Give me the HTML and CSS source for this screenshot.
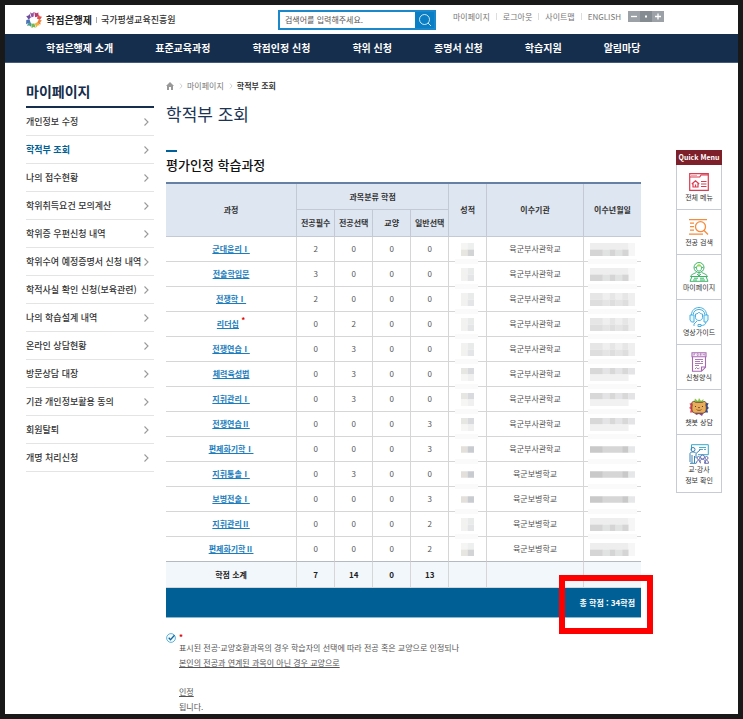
FILE: index.html
```html
<!DOCTYPE html>
<html lang="ko">
<head>
<meta charset="utf-8">
<meta name="viewport" content="width=device-width, initial-scale=1">
<title>학적부 조회 | 학점은행제</title>
<link rel="stylesheet" href="styles.css">
</head>
<body>
<svg class="defs" aria-hidden="true">
  <symbol id="arrow" viewBox="0 0 6 8"><path d="M1.5.5 5 4 1.5 7.500" fill="none" stroke="#999" stroke-width="1.1"/></symbol>
  <symbol id="date-a" viewBox="0 0 7 2" preserveAspectRatio="none">
    <path fill="#eee" d="M0 0h6v1H0z"/><path fill="#f6f6f6" d="M6 0h1v2H6z"/><path fill="#d5d5d5" d="M0 1h2v1H0zM3 1h1v1H3zM5 1h1v1H5z"/><path fill="#e1e2e2" d="M2 1h1v1H2zM4 1h1v1H4z"/>
  </symbol>
  <symbol id="date-b" viewBox="0 0 7 2" preserveAspectRatio="none">
    <path fill="#e6e6e6" d="M0 0h2v1H0zM3 0h1v1H3zM5 0h1v1H5z"/><path fill="#efefef" d="M2 0h1v1H2zM4 0h1v1H4zM6 0h1v2H6z"/><path fill="#dedede" d="M0 1h2v1H0zM3 1h1v1H3zM5 1h1v1H5z"/><path fill="#e5e5e5" d="M2 1h1v1H2zM4 1h1v1H4z"/>
  </symbol>
  <symbol id="date-c" viewBox="0 0 7 2" preserveAspectRatio="none">
    <path fill="#d8d8d8" d="M0 0h2v1H0zM3 0h1v1H3zM5 0h1v1H5z"/><path fill="#e4e4e7" d="M2 0h1v1H2zM4 0h1v1H4zM6 0h1v1H6z"/><path fill="#f1f1f1" d="M0 1h6v1H0z"/>
  </symbol>
  <symbol id="date-d" viewBox="0 0 7 2" preserveAspectRatio="none">
    <path fill="#c9c9c9" d="M0 .5h2v1H0zM5 .5h1v1H5z"/><path fill="#d6d6d6" d="M2 .5h3v1H2z"/><path fill="#e6e7e8" d="M6 .5h1v1H6z"/>
  </symbol>
  <symbol id="grade-a" viewBox="0 0 2 2" preserveAspectRatio="none">
    <path fill="#f5f5f4" d="M0 0h1v1H0z"/><path fill="#eeefef" d="M1 0h1v1H1z"/><path fill="#e7e6e1" d="M0 1h1v1H0z"/><path fill="#d3d4d5" d="M1 1h1v1H1z"/>
  </symbol>
  <symbol id="grade-b" viewBox="0 0 2 2" preserveAspectRatio="none">
    <path fill="#f2f2f0" d="M0 0h1v2H0z"/><path fill="#e9eaea" d="M1 0h1v1H1z"/><path fill="#e4e5e7" d="M1 1h1v1H1z"/>
  </symbol>
  <symbol id="grade-c" viewBox="0 0 2 2" preserveAspectRatio="none">
    <path fill="#e6e6e3" d="M0 0h1v1H0z"/><path fill="#d8dadd" d="M1 0h1v1H1z"/><path fill="#f6f6f5" d="M0 1h1v1H0z"/><path fill="#f0f0f1" d="M1 1h1v1H1z"/>
  </symbol>
  <symbol id="grade-d" viewBox="0 0 2 2" preserveAspectRatio="none">
    <path fill="#e3e0dc" d="M0 .5h1v1H0z"/><path fill="#c8cbcf" d="M1 .5h1v1H1z"/>
  </symbol>
</svg>

<div class="page">
  <header class="top">
    <a class="logo" href="#">
      <svg class="logo-mark" viewBox="0 0 16 16" aria-hidden="true">
        <path fill="#95519f" d="M4 .3 6 1.400 7.900 0 7.700 4.600 5.600 5.500z"/>
        <path fill="#b73b73" d="m8.300.1 1.900 1.100L12.500.6l-.6 3.900-2.800.8z"/>
        <path fill="#e1514d" d="m12.700 2 .9 2.200 2.400.6-2.100 3.200-3-1.500z"/>
        <path fill="#e88641" d="m12.800 7.400 3.100 1.200-1.600 1.700.4 2.300-3.800-1.400z"/>
        <path fill="#efb43c" d="m11.300 10.200 2.700 3-2.400.4-1.100 2-1.900-3.900z"/>
        <path fill="#75b852" d="m8.400 11.400 1.300 4.300-2.200-.6-1.900 1-.3-4.300z"/>
        <path fill="#4a9d91" d="m5.300 10.900-.2 3.800-1.900-1.200-2.300.3 2.200-4.100z"/>
        <path fill="#4a73b9" d="m3.500 7.200 1 3.400-2.400.6L.1 12.300l.2-4.200z"/>
        <path fill="#704c9c" d="M.2 3.900 2.200 3.800l1.400-1.900 1.300 3.700-2.300 2z"/>
      </svg>
      <strong>학점은행제</strong><span class="bar"></span><span class="org">국가평생교육진흥원</span>
    </a>
    <form class="search" role="search">
      <input type="text" aria-label="검색어" placeholder="검색어를 입력해주세요.">
      <button type="button" aria-label="검색">
        <svg viewBox="0 0 14 14"><circle cx="6.500" cy="6.500" r="5" fill="none" stroke="#fff" stroke-width=".8"/><path d="m10 10 3 3" stroke="#fff" stroke-width=".8"/></svg>
      </button>
    </form>
    <div class="util">
      <a href="#">마이페이지</a><a href="#">로그아웃</a><a href="#">사이트맵</a><a href="#">ENGLISH</a>
      <div class="zoom">
        <button type="button" aria-label="축소"><svg viewBox="0 0 12 11"><path d="M3 5.500h6" stroke="#fff" stroke-width="1.300"/></svg></button>
        <button type="button" aria-label="기본 크기"><svg viewBox="0 0 12 11"><path d="M5 4.500h2v2H5z" fill="#fff"/></svg></button>
        <button type="button" aria-label="확대"><svg viewBox="0 0 12 11"><path d="M3 5.500h6M6 2.500v6" stroke="#fff" stroke-width="1.300"/></svg></button>
      </div>
    </div>
  </header>

  <nav class="gnb">
    <a href="#">학점은행제 소개</a><a href="#">표준교육과정</a><a href="#">학점인정 신청</a><a href="#">학위 신청</a><a href="#">증명서 신청</a><a href="#">학습지원</a><a href="#">알림마당</a>
  </nav>

  <div class="body">
    <aside class="side">
      <h2>마이페이지</h2>
      <ul>
        <li><a href="#">개인정보 수정<svg><use href="#arrow"/></svg></a></li>
        <li><a class="on" href="#">학적부 조회<svg><use href="#arrow"/></svg></a></li>
        <li><a href="#">나의 접수현황<svg><use href="#arrow"/></svg></a></li>
        <li><a href="#">학위취득요건 모의계산<svg><use href="#arrow"/></svg></a></li>
        <li><a href="#">학위증 우편신청 내역<svg><use href="#arrow"/></svg></a></li>
        <li><a href="#">학위수여 예정증명서 신청 내역<svg><use href="#arrow"/></svg></a></li>
        <li><a href="#">학적사실 확인 신청(보육관련)<svg><use href="#arrow"/></svg></a></li>
        <li><a href="#">나의 학습설계 내역<svg><use href="#arrow"/></svg></a></li>
        <li><a href="#">온라인 상담현황<svg><use href="#arrow"/></svg></a></li>
        <li><a href="#">방문상담 대장<svg><use href="#arrow"/></svg></a></li>
        <li><a href="#">기관 개인정보활용 동의<svg><use href="#arrow"/></svg></a></li>
        <li><a href="#">회원탈퇴<svg><use href="#arrow"/></svg></a></li>
        <li><a href="#">개명 처리신청<svg><use href="#arrow"/></svg></a></li>
      </ul>
    </aside>

    <main>
      <div class="crumbs">
        <svg class="home" viewBox="0 0 8 8" aria-hidden="true"><path fill="#999" d="M4 0 0 4h1v4h2V5h2v3h2V4h1z"/></svg>
        <svg class="sep" viewBox="0 0 4 6" aria-hidden="true"><path d="m1 .5 2 2.500-2 2.500" fill="none" stroke="#bbb" stroke-width=".7"/></svg>
        <a href="#">마이페이지</a>
        <svg class="sep" viewBox="0 0 4 6" aria-hidden="true"><path d="m1 .5 2 2.500-2 2.500" fill="none" stroke="#bbb" stroke-width=".7"/></svg>
        <strong>학적부 조회</strong>
      </div>
      <h1>학적부 조회</h1>
      <h2 class="section">평가인정 학습과정</h2>

      <table>
        <colgroup><col class="c-name"><col class="c-num"><col class="c-num"><col class="c-num"><col class="c-num"><col class="c-num"><col class="c-org"><col class="c-date"></colgroup>
        <thead>
          <tr><th rowspan="2">과정</th><th colspan="4">과목분류 학점</th><th rowspan="2">성적</th><th rowspan="2">이수기관</th><th rowspan="2">이수년월일</th></tr>
          <tr><th class="sub">전공필수</th><th>전공선택</th><th>교양</th><th>일반선택</th></tr>
        </thead>
        <tbody>
          <tr><td><a href="#">군대윤리Ⅰ</a></td><td>2</td><td>0</td><td>0</td><td>0</td><td class="m"><svg class="g"><use href="#grade-a"/></svg></td><td>육군부사관학교</td><td class="m"><svg class="d"><use href="#date-a"/></svg></td></tr>
          <tr><td><a href="#">전술학입문</a></td><td>3</td><td>0</td><td>0</td><td>0</td><td class="m"><svg class="g"><use href="#grade-b"/></svg></td><td>육군부사관학교</td><td class="m"><svg class="d"><use href="#date-a"/></svg></td></tr>
          <tr><td><a href="#">전쟁학Ⅰ</a></td><td>2</td><td>0</td><td>0</td><td>0</td><td class="m"><svg class="g"><use href="#grade-b"/></svg></td><td>육군부사관학교</td><td class="m"><svg class="d"><use href="#date-b"/></svg></td></tr>
          <tr><td><a href="#">리더십</a> <sup>*</sup></td><td>0</td><td>2</td><td>0</td><td>0</td><td class="m"><svg class="g"><use href="#grade-b"/></svg></td><td>육군부사관학교</td><td class="m"><svg class="d"><use href="#date-b"/></svg></td></tr>
          <tr><td><a href="#">전쟁연습Ⅰ</a></td><td>0</td><td>3</td><td>0</td><td>0</td><td class="m"><svg class="g"><use href="#grade-b"/></svg></td><td>육군부사관학교</td><td class="m"><svg class="d"><use href="#date-b"/></svg></td></tr>
          <tr><td><a href="#">체력육성법</a></td><td>0</td><td>3</td><td>0</td><td>0</td><td class="m"><svg class="g"><use href="#grade-c"/></svg></td><td>육군부사관학교</td><td class="m"><svg class="d"><use href="#date-c"/></svg></td></tr>
          <tr><td><a href="#">지휘관리Ⅰ</a></td><td>0</td><td>3</td><td>0</td><td>0</td><td class="m"><svg class="g"><use href="#grade-c"/></svg></td><td>육군부사관학교</td><td class="m"><svg class="d"><use href="#date-c"/></svg></td></tr>
          <tr><td><a href="#">전쟁연습Ⅱ</a></td><td>0</td><td>0</td><td>0</td><td>3</td><td class="m"><svg class="g"><use href="#grade-c"/></svg></td><td>육군부사관학교</td><td class="m"><svg class="d"><use href="#date-c"/></svg></td></tr>
          <tr><td><a href="#">편제화기학Ⅰ</a></td><td>0</td><td>0</td><td>0</td><td>3</td><td class="m"><svg class="g"><use href="#grade-d"/></svg></td><td>육군부사관학교</td><td class="m"><svg class="d"><use href="#date-d"/></svg></td></tr>
          <tr><td><a href="#">지휘통솔Ⅰ</a></td><td>0</td><td>3</td><td>0</td><td>0</td><td class="m"><svg class="g"><use href="#grade-d"/></svg></td><td>육군보병학교</td><td class="m"><svg class="d"><use href="#date-d"/></svg></td></tr>
          <tr><td><a href="#">보병전술Ⅰ</a></td><td>0</td><td>0</td><td>0</td><td>3</td><td class="m"><svg class="g"><use href="#grade-d"/></svg></td><td>육군보병학교</td><td class="m"><svg class="d"><use href="#date-d"/></svg></td></tr>
          <tr><td><a href="#">지휘관리Ⅱ</a></td><td>0</td><td>0</td><td>0</td><td>2</td><td class="m"><svg class="g"><use href="#grade-b"/></svg></td><td>육군보병학교</td><td class="m"><svg class="d"><use href="#date-a"/></svg></td></tr>
          <tr><td><a href="#">편제화기학Ⅱ</a></td><td>0</td><td>0</td><td>0</td><td>2</td><td class="m"><svg class="g"><use href="#grade-a"/></svg></td><td>육군보병학교</td><td class="m"><svg class="d"><use href="#date-a"/></svg></td></tr>
        </tbody>
        <tfoot>
          <tr class="subtotal"><th>학점 소계</th><td>7</td><td>14</td><td>0</td><td>13</td><td></td><td></td><td></td></tr>
          <tr class="total"><td colspan="8">총 학점 : 34학점<span class="mark"></span></td></tr>
        </tfoot>
      </table>

      <div class="note">
        <svg class="check" viewBox="0 0 10 10" aria-hidden="true"><circle cx="5" cy="5" r="4.400" fill="#f4fbff" stroke="#3a9fd6" stroke-width=".8"/><path d="M2.700 4.800 4.500 6.700 8.500 2.300" fill="none" stroke="#17669b" stroke-width="1.300"/></svg>
        <div>
          <span class="star">*</span>
          <p>표시된 전공·교양호환과목의 경우 학습자의 선택에 따라 전공 혹은 교양으로 인정되나</p>
          <p><u>본인의 전공과 연계된 과목이 아닌 경우 교양으로</u></p>
          <p class="gap"><u>인정</u></p>
          <p>됩니다.</p>
        </div>
      </div>
    </main>

    <aside class="quick">
      <h2>Quick Menu</h2>
      <a href="#">
        <svg viewBox="0 0 20 18" fill="none" stroke="#dc3a50"><path d="M.7.7h18.600v16.600H.7zM.7 4h10l1.300-2h7" stroke-width="1.200"/><path d="M2.500 2.400h1m1 0h1m1 0h1" stroke-width="1"/><path d="m2.800 11 3.700-3.300 3.700 3.300M4 10.500V14h5v-3.500M6.500 14v-2.500" stroke-width="1.200"/><path d="M12 8.500h5.500M12 11h5.500M12 13.500h5.500" stroke-width="1.200"/></svg>
        전체 메뉴</a>
      <a href="#">
        <svg viewBox="0 0 20 18" fill="none" stroke="#f58b3c" stroke-width="1.300"><path d="M0 1.700h18M1 5.200h4M1 8.700h4M1 12.200h4M0 16.200h14"/><circle cx="11.500" cy="8.700" r="5"/><path d="m15 12.500 4 4"/></svg>
        전공 검색</a>
      <a href="#">
        <svg viewBox="0 0 20 20" fill="none" stroke="#3fb469"><circle cx="10" cy="5.500" r="5" stroke-width="1"/><path d="M7.500 5.500c0-3 5-3 5 0s-1 3.500-2.500 3.500-2.500-.5-2.500-3.500zM5.500 5.500h2m5 0h2" stroke-width=".9"/><path fill="#9bdc4d" stroke="none" d="M7.700 4.500c.5-3 4.100-3 4.600 0z"/><path d="M7.500 9.500c0 2-5 2-6 5h17c-1-3-6-3-6-5M10 11v3M1 19.300 3 14.500h14l2 4.800zM5 16.200h4m2 0h4M4 18h4m3 0h5" stroke-width="1"/><path d="m8 12 2 2 2-2" stroke-width=".9"/></svg>
        마이페이지</a>
      <a href="#">
        <svg viewBox="0 0 20 20" fill="none" stroke="#49afe0"><path d="M2.500 8C2.500-2 17.500-2 17.500 8M4.300 7.500C4.300.8 15.700.8 15.700 7.500" stroke-width="1"/><path fill="#e7f7ff" d="M1 8h4v7H2.500L1 13zm14 0h4v5l-1.500 2H15z"/><path d="M6.500 7c2.500 0 3-1.500 3.500-2 .5 1 1.500 2 3.500 2v3.500c0 4-7 4-7 0zM17 15c0 3-3 3.500-5 3.500M9 17.500h3v2H9zM8 14l-3 3v2"/></svg>
        영상가이드</a>
      <a href="#">
        <svg viewBox="0 0 16 20" fill="none" stroke="#a668b1"><path d="M1 .7h14v4H1zM1.500 4.700v14.600h9l4-4V4.700M10.500 19v-4h4" stroke-width="1.100"/><path d="M2.800 1.700v2m0-2h1.600m-1.600 1h1.300M6 1.700h1.300v1.800H6zm3 2V1.700h1.300v1H9l1.500 1m1.500 0v-2l.8 1 .8-1v2" stroke-width=".6"/><path d="M4 7.500h8M4 9.500h5m1 0h2M4 11.500h8M4 13.500h4M4 17l1.500-1.500L7 17l1.500-1" stroke-width=".9"/></svg>
        신청양식</a>
      <a href="#">
        <svg viewBox="0 0 20 18"><path fill="#8ac54a" d="m5 4 1-3.500L9 3l1-3 2 3 2.500-2L14 5z"/><path fill="#ec4a5c" d="M3 5 .5 5.500 1.500 8 .2 10l1.500 1.500-.7 3h4z"/><path fill="#374c91" d="m17 5 2.600.3L18.500 8l1.300 2-1.500 1.800.8 2.700h-4z"/><path fill="#8b4a9a" d="m5 13 2 4 3-1 3 2 2-4z"/><path fill="#e9ac59" stroke="#624439" stroke-width=".9" d="M3.200 7C1.800 3.400 5 2.500 6.500 4.300h7C15.500 2.500 18 4 16.800 7c1.200 4 .2 8-3.300 8.200h-7C3 15 2.200 11 3.200 7z"/><path d="M6 8.500h1m6 0h1" stroke="#57382e"/><path fill="#57382e" d="M9 9h2l-1 1.500z"/><path d="M7.500 11.500c1 1.200 4 1.200 5 0" fill="none" stroke="#57382e" stroke-width=".7"/></svg>
        챗봇 상담</a>
      <a class="tall" href="#">
        <svg viewBox="0 0 20 20" fill="none"><path d="M2.500 6V.7h16.800v10H9" stroke="#35a7cb" stroke-width="1"/><path d="M10 3.500h7M10 5.500h4m1 0h2" stroke="#35a7cb" stroke-width=".9"/><g stroke="#3882b3"><circle cx="4" cy="5.500" r="2"/><path d="M1 18V9.500c0-2 5.500-2 6 0l4.500-4M3 11v8m2.500-7v7M7 10v4M1 19.300h6"/></g><g stroke="#5d62a7" stroke-width=".9"><circle cx="9.500" cy="14" r="1.500"/><circle cx="13.500" cy="13" r="2"/><circle cx="17.500" cy="14" r="1.500"/><path d="M7.500 19.300c0-4 4-4 4 0m-1-1c0-4 6-4 6 0v1m-1 0c0-4 4-4 4 0z"/></g></svg>
        교·강사<br>정보 확인</a>
    </aside>
  </div>
</div>
</body>
</html>
```
FILE: styles.css
```css
* { box-sizing: border-box; }

body {
  margin: 0;
  padding: 5px;
  min-height: 100vh;
  display: flex;
  background: #191919;
  color: #555;
  font-family: "Noto Sans CJK KR", "Noto Sans", sans-serif;
  font-size: 8px;
  line-height: 12px;
}

a { color: inherit; text-decoration: none; }
h1, h2, p, ul { margin: 0; padding: 0; }
ul { list-style: none; }
button { border: 0; padding: 0; font: inherit; cursor: pointer; }
svg { display: block; flex: none; }
.defs { position: absolute; width: 0; height: 0; }

.page { flex: 1; min-width: 0; background: #fff; }

/* top bar */
.top {
  display: grid;
  grid-template-columns: 252px 158px 1fr;
  align-items: center;
  height: 29px;
  padding-left: 21px;
}
.logo { display: flex; align-items: center; color: #333; }
.logo-mark { width: 16px; height: 16px; margin-right: 4px; }
.logo strong { font-size: 10px; color: #222; }
.logo .bar { width: 1px; height: 6px; margin: 0 4px; background: #aaa; }
.logo .org { font-size: 9px; font-weight: 500; }

.search { display: flex; height: 20px; border: 2px solid #1a88cb; }
.search input {
  flex: 1;
  min-width: 0;
  border: 0;
  padding: 0 5px;
  font: inherit;
  color: #555;
  outline: 0;
}
.search input::placeholder { color: #555; opacity: 1; }
.search button { width: 19px; background: #0b7fc6; display: grid; place-items: center; }
.search button svg { width: 14px; height: 14px; }

.util {
  display: flex;
  align-items: center;
  align-self: start;
  height: 23px;
  padding-left: 17px;
  color: #777;
}
.util a + a::before {
  content: "";
  display: inline-block;
  width: 1px;
  height: 7px;
  margin: 0 6px;
  background: #ddd;
}
.zoom { display: flex; margin-left: 7px; }
.zoom button { width: 12px; height: 11px; background: #9ba1a6; }
.zoom button:nth-child(2) { background: #858c91; }
.zoom svg { width: 12px; height: 11px; }

.gnb {
  display: flex;
  align-items: center;
  gap: 42px;
  height: 29px;
  padding-left: 41px;
  background: #152e4d;
  border-bottom: 1px solid #435a78;
  color: #fff;
  font-size: 10px;
  font-weight: 700;
  white-space: nowrap;
}

.body {
  display: grid;
  grid-template-columns: 128px minmax(0, 1fr) 46px;
  align-items: start;
  padding: 0 16px 0 21px;
}

/* left menu */
.side { padding-top: 18px; }
.side h2 {
  padding-bottom: 5px;
  border-bottom: 2px solid #152e4d;
  color: #152e4d;
  font-size: 14px;
  line-height: 20px;
}
.side a {
  display: flex;
  align-items: center;
  justify-content: space-between;
  height: 28px;
  padding-right: 5px;
  border-bottom: 1px solid #e4e4e4;
  color: #333;
  font-size: 9px;
  font-weight: 500;
  white-space: nowrap;
}
.side a.on { color: #005f94; font-weight: 700; }
.side svg { width: 6px; height: 8px; }

/* main column */
main { padding-top: 17px; margin: 0 35px 0 12px; }
.crumbs { display: flex; align-items: center; color: #777; }
.crumbs strong { color: #333; }
.home { width: 8px; height: 8px; }
.sep { width: 4px; height: 6px; margin: 0 4px 0 5px; }
h1 {
  margin-top: 10px;
  color: #1d3555;
  font-size: 17px;
  font-weight: 400;
  line-height: 24px;
}
.section {
  margin: 24px 0 7px;
  color: #111;
  font-size: 13px;
  font-weight: 500;
  line-height: 20px;
}
.section::before {
  content: "";
  display: block;
  width: 11px;
  height: 2px;
  margin-bottom: 3px;
  background: #00619a;
}

table {
  width: 100%;
  table-layout: fixed;
  border-collapse: separate;
  border-spacing: 0;
  border-top: 2px solid #6580a4;
  text-align: center;
}
.c-name { width: 27.4%; }
.c-num { width: 8%; }
.c-org { width: 20.4%; }
.c-date { width: 12.2%; }
th, td {
  height: 25px;
  padding: 0;
  border-bottom: 1px solid #d6d6d6;
  border-left: 1px solid #d6d6d6;
}
tr > :first-child { border-left: 0; }
thead th {
  height: 27px;
  background: #dee6f1;
  border-color: #c4cad5;
  color: #333;
}
thead tr:first-child th { height: 26px; }
thead tr .sub { border-left: 1px solid #c4cad5; }
tbody a { color: #1b7dbd; font-weight: 700; text-decoration: underline; }
sup { color: #e60000; font-size: 8px; font-weight: 700; line-height: 1px; }

.m { position: relative; }
.m svg { height: 13px; margin: 0 auto; }
.g { width: 13px; }
.d { width: 45px; }
.m::after {
  content: "";
  position: absolute;
  z-index: 1;
  left: 6px;
  right: 8px;
  bottom: -3px;
  height: 5px;
  background: #fafafa;
}
.m:last-child::after { left: 4px; right: 4px; }
tbody tr:last-child .m::after { display: none; }
tbody tr:last-child td { border-bottom-color: #b3bac2; }

.subtotal th, .subtotal td {
  height: 26px;
  background: #f2f7fc;
  color: #222;
  font-weight: 700;
}
.total td {
  position: relative;
  height: 30px;
  padding-right: 6px;
  background: #005f94;
  border-bottom: 1px solid #8db6cf;
  color: #fff;
  font-weight: 700;
  text-align: right;
}
.mark {
  position: absolute;
  top: -13px;
  right: -12px;
  bottom: -17px;
  width: 94px;
  border: 6px solid #fe0000;
}

.note { display: flex; gap: 3px; margin-top: 13px; }
.check { width: 10px; height: 10px; margin-top: 2px; }
.star { display: block; height: 9px; color: #e60000; font-weight: 700; line-height: 12px; }
.note p { line-height: 15px; }
.note .gap { margin-top: 14px; }

/* quick menu */
.quick {
  margin-top: 87px;
  border: 1px solid #c5ccd8;
  border-top: 0;
  text-align: center;
  font-size: 7px;
  line-height: 11px;
}
.quick h2 {
  margin: 0 -1px;
  background: #7d2029;
  color: #fff;
  font-size: 7px;
  line-height: 15px;
}
.quick a {
  display: flex;
  flex-direction: column;
  align-items: center;
  justify-content: flex-end;
  height: 45px;
  padding-bottom: 6px;
  border-bottom: 1px solid #c5ccd8;
  color: #333;
}
.quick a.tall { height: 57px; border-bottom: 0; }
.quick svg { width: 20px; height: 20px; }
```
